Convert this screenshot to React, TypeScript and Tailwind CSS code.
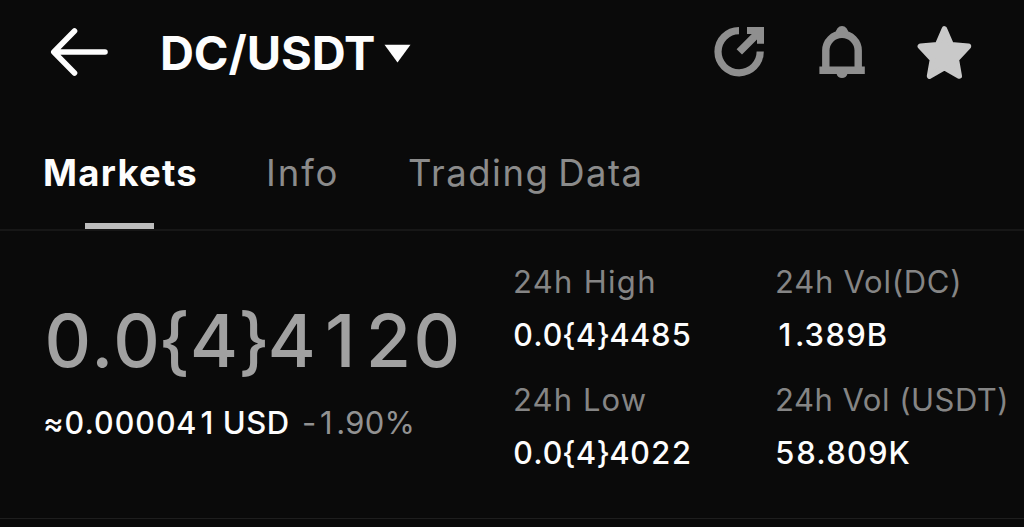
function Num({ text }: { text: string }) {
  return (
    <>
      {(text.match(/1|[02-9.{}]+|[^0-9.{}]+/g) ?? []).map((part, i) =>
        part === "1" ? (
          <span key={i} className="inline-block w-[0.66em] text-center">1</span>
        ) : /^[0-9.{}]+$/.test(part) ? (
          <span key={i} className="tabular-nums">{part}</span>
        ) : (
          <span key={i}>{part}</span>
        ),
      )}
    </>
  );
}

function BackIcon() {
  return (
    <svg className="block h-[104px] w-[60px]" viewBox="50 0 60 104" fill="none" stroke="#fdfdfd" strokeWidth="5.6" strokeLinecap="round" strokeLinejoin="round">
      <path d="M105 52H54.5M74.5 31 53.8 52 74.5 73" />
    </svg>
  );
}

function ShareIcon() {
  return (
    <svg className="block h-[104px] w-[52px]" viewBox="713 0 52 104">
      <path d="M739 30.6A21.1 21.1 0 1 0 760.2 51.6" fill="none" stroke="#8f8f8f" strokeWidth="7.2" />
      <path d="M747 27H764V43.7H757V39.4L742 54.4 736.6 49.2 751.8 34H747Z" fill="#8f8f8f" />
    </svg>
  );
}

function BellIcon() {
  return (
    <svg className="block h-[104px] w-[46px]" viewBox="819 0 46 104">
      <path d="M825.8 68V50.5A16.2 16.2 0 0 1 858.2 50.5V68" fill="none" stroke="#8f8f8f" strokeWidth="7.4" />
      <path d="M819.4 66.4H864.8V74H847.4A5.6 5.6 0 0 1 836.6 74H819.4ZM835.6 33.5A6.4 7.6 0 0 1 848.4 33.5Z" fill="#8f8f8f" />
    </svg>
  );
}

function StarIcon() {
  return (
    <svg className="block h-[104px] w-[56px]" viewBox="916 0 56 104">
      <path
        d="M944.4 29 951.2 44.8 968.4 46.3 956.3 59.4 959.2 76 944.4 67.6 929.6 76 932.5 59.4 920.4 46.3 937.6 44.8Z"
        fill="#c9c9c9" stroke="#c9c9c9" strokeWidth="5.6" strokeLinejoin="round"
      />
    </svg>
  );
}

function Stat({ label, value, labelClass, valueClass }: { label: string; value: string; labelClass: string; valueClass: string }) {
  return (
    <div className="flex h-[118px] flex-col whitespace-nowrap text-[31px] leading-[53px]">
      <div className={"text-[#858585] " + labelClass}>{label}</div>
      <div className={"font-medium text-[#fdfdfd] " + valueClass}><Num text={value} /></div>
    </div>
  );
}

export default function App() {
  return (
    <div className="h-[527px] w-[1024px] overflow-hidden bg-[#0a0a0a] font-['Inter',sans-serif] text-[#fdfdfd]">
      <header className="flex h-[104px] items-center pl-[50px] pr-[52px]">
        <BackIcon />
        <h1 className="ml-[50px] w-[224px] whitespace-nowrap pt-[2px] text-[47px] font-bold leading-[60px] tracking-[-0.1px]">DC/USDT</h1>
        <svg className="block h-[104px] w-[28px]" viewBox="384 0 28 104">
          <path d="M384.5 44.8H410.5L397.5 62.5Z" fill="#fdfdfd" />
        </svg>
        <div className="ml-auto flex">
          <ShareIcon />
          <div className="ml-[54px]"><BellIcon /></div>
          <div className="ml-[51px]"><StarIcon /></div>
        </div>
      </header>

      <nav className="flex h-[127px] border-b-2 border-[#171717] pl-[43px] text-[36.5px] leading-[60px] whitespace-nowrap text-[#8b8b8b]">
        <div className="flex w-[223px] flex-col pt-[39px]">
          <span className="font-bold tracking-[1.25px] text-[#fdfdfd]">Markets</span>
          <span className="ml-[42px] mt-[20px] h-[6px] w-[69px] shrink-0 bg-[#bdbdbd]" />
        </div>
        <span className="w-[142px] pt-[39px] tracking-[1.9px]">Info</span>
        <span className="pt-[39px] tracking-[1.5px] [word-spacing:-3px]">Trading Data</span>
      </nav>

      <main className="flex h-[288px] border-b border-[#1e1e1e]">
        <section className="w-[513px] pl-[43px] pt-[64px] whitespace-nowrap">
          <div className="pl-[1px] text-[73.5px] font-medium leading-[92px] tracking-[0.65px] text-[#a1a1a1]"><Num text="0.0{4}4120" /></div>
          <div className="flex pt-[16px] text-[31px] leading-[40px]">
            <span className="w-[259px] font-medium tracking-[0.55px] [word-spacing:-3.5px]"><Num text="≈0.000041 USD" /></span>
            <span className="tracking-[-0.2px] text-[#929292]"><Num text="-1.90%" /></span>
          </div>
        </section>
        <section className="w-[262px] pt-[24px]">
          <Stat label="24h High" value={"0.0{4}4485"} labelClass="tracking-[1.3px]" valueClass="tracking-[0.6px]" />
          <Stat label="24h Low" value={"0.0{4}4022"} labelClass="tracking-[1.1px]" valueClass="tracking-[0.6px]" />
        </section>
        <section className="pt-[24px]">
          <Stat label="24h Vol(DC)" value="1.389B" labelClass="tracking-[0.75px]" valueClass="tracking-[0.7px]" />
          <Stat label="24h Vol (USDT)" value="58.809K" labelClass="tracking-[0.5px]" valueClass="tracking-[0.8px]" />
        </section>
      </main>
    </div>
  );
}
